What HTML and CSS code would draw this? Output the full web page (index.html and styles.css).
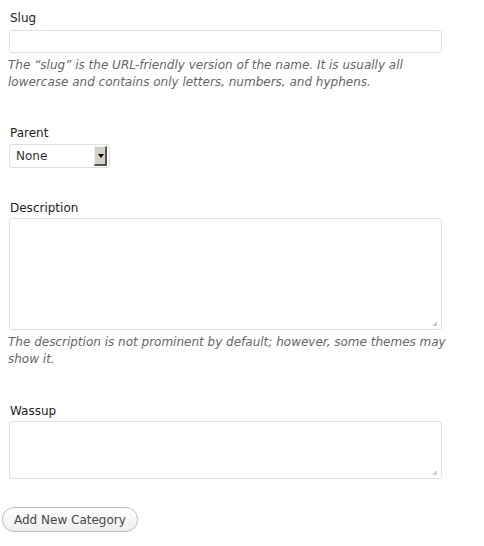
FILE: index.html
```html
<!DOCTYPE html>
<html>
<head>
<meta charset="utf-8">
<link rel="stylesheet" href="styles.css">
</head>
<body>
<form class="form">
  <div class="field field-slug">
    <label class="label" for="slug">Slug</label>
    <input class="text-input" id="slug" type="text">
    <p class="hint">The “slug” is the URL-friendly version of the name. It is usually all lowercase and contains only letters, numbers, and hyphens.</p>
  </div>
  <div class="field field-parent">
    <label class="label">Parent</label>
    <div class="select">
      <span class="select-value">None</span>
      <span class="select-arrow"><span class="tri"></span></span>
    </div>
  </div>
  <div class="field field-desc">
    <label class="label" for="desc">Description</label>
    <div class="area-wrap">
      <textarea class="area area-tall" id="desc"></textarea>
      <span class="grip"></span>
    </div>
    <p class="hint">The description is not prominent by default; however, some themes may show it.</p>
  </div>
  <div class="field field-wassup">
    <label class="label" for="wassup">Wassup</label>
    <div class="area-wrap">
      <textarea class="area area-short" id="wassup"></textarea>
      <span class="grip"></span>
    </div>
  </div>
  <div class="actions">
    <button class="button" type="button">Add New Category</button>
  </div>
</form>
</body>
</html>
```
FILE: styles.css
```css
html, body {
  margin: 0;
  padding: 0;
  background: #fff;
}
body {
  font-family: "DejaVu Sans", "Liberation Sans", sans-serif;
  font-size: 12px;
  color: #333;
  width: 484px;
  height: 546px;
  overflow: hidden;
}
.form {
  display: flex;
  flex-direction: column;
  padding: 10px 0 0 0;
}
.field {
  display: flex;
  flex-direction: column;
  align-items: flex-start;
  padding-left: 9px;
}
.label {
  display: block;
  line-height: 17px;
  margin-left: 1px;
  color: #222;
}
.text-input {
  box-sizing: border-box;
  width: 433px;
  height: 23px;
  margin: 3px 0 0 0;
  border: 1px solid #dfdfdf;
  border-radius: 3px;
  background: #fff;
  padding: 0 4px;
  font: inherit;
  outline: none;
}
.hint {
  margin: 4px 0 0 -1px;
  font-style: italic;
  color: #666;
  line-height: 17px;
  width: 452px;
}
.field-parent {
  margin-top: 34px;
}
.select {
  box-sizing: border-box;
  width: 101px;
  height: 24px;
  margin-top: 2px;
  border: 1px solid #dfdfdf;
  border-radius: 3px;
  background: #fff;
  display: flex;
  align-items: center;
  justify-content: space-between;
  padding: 0 2px 0 6px;
}
.select-value {
  color: #333;
}
.select-arrow {
  box-sizing: border-box;
  width: 13px;
  height: 20px;
  background: #d4d0c8;
  border-top: 1px solid #f0f0f0;
  border-left: 1px solid #f0f0f0;
  border-right: 2px solid #555;
  border-bottom: 2px solid #555;
  display: flex;
  align-items: center;
  justify-content: center;
}
.tri {
  width: 0;
  height: 0;
  border-left: 3px solid transparent;
  border-right: 3px solid transparent;
  border-top: 4px solid #000;
  margin-left: 1px;
}
.field-desc {
  margin-top: 32px;
}
.area-wrap {
  position: relative;
  margin-top: 1px;
  display: flex;
}
.area {
  box-sizing: border-box;
  width: 433px;
  border: 1px solid #dfdfdf;
  border-radius: 3px;
  background: #fff;
  resize: none;
  font: inherit;
  outline: none;
  margin: 0;
}
.area-tall {
  height: 112px;
}
.area-short {
  height: 58px;
}
.grip {
  position: absolute;
  right: 5px;
  bottom: 4px;
  width: 4px;
  height: 4px;
  background:
    radial-gradient(circle, #888 0.6px, transparent 0.8px) 2px 0 / 2px 2px no-repeat,
    radial-gradient(circle, #888 0.6px, transparent 0.8px) 0 2px / 2px 2px no-repeat,
    radial-gradient(circle, #888 0.6px, transparent 0.8px) 2px 2px / 2px 2px no-repeat;
}
.field-wassup {
  margin-top: 35px;
}
.actions {
  margin-top: 28px;
  padding-left: 2px;
}
.button {
  box-sizing: border-box;
  height: 25px;
  padding: 0 11px;
  border: 1px solid #bbb;
  border-radius: 12px;
  background: linear-gradient(#fff, #eee);
  color: #464646;
  font: inherit;
  font-size: 12px;
  cursor: pointer;
}
```
